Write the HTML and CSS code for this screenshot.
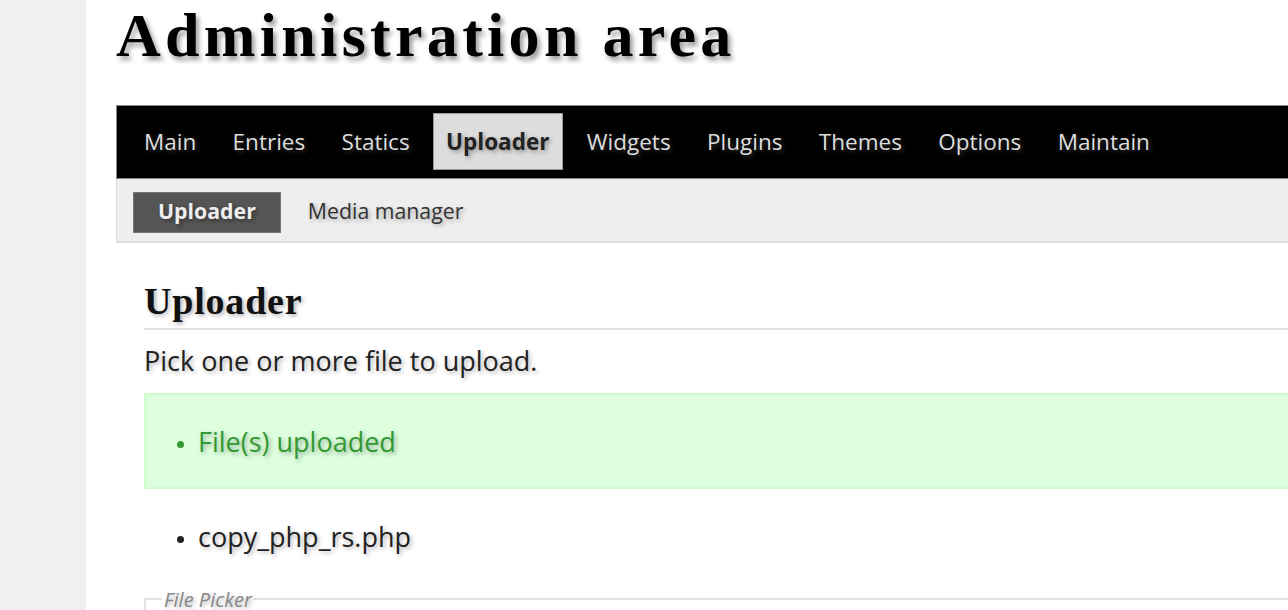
FILE: index.html
```html
<!DOCTYPE html>
<html lang="en">
<head>
<meta charset="utf-8">
<title>Administration area</title>
<link rel="stylesheet" href="styles.css">
</head>
<body>
<div class="page">
  <aside class="sidebar"></aside>
  <main class="main">
    <h1 class="site-title">Administration area</h1>
    <nav class="menu">
      <a class="menu-item" href="#">Main</a>
      <a class="menu-item" href="#">Entries</a>
      <a class="menu-item" href="#">Statics</a>
      <a class="menu-item active" href="#">Uploader</a>
      <a class="menu-item" href="#">Widgets</a>
      <a class="menu-item" href="#">Plugins</a>
      <a class="menu-item" href="#">Themes</a>
      <a class="menu-item" href="#">Options</a>
      <a class="menu-item" href="#">Maintain</a>
    </nav>
    <nav class="submenu">
      <a class="sub-item active" href="#">Uploader</a>
      <a class="sub-item" href="#">Media manager</a>
    </nav>
    <section class="content">
      <h2 class="section-title">Uploader</h2>
      <p class="intro">Pick one or more file to upload.</p>
      <div class="success">
        <ul class="success-list">
          <li>File(s) uploaded</li>
        </ul>
      </div>
      <ul class="file-list">
        <li>copy_php_rs.php</li>
      </ul>
      <fieldset class="picker">
        <legend class="picker-legend">File Picker</legend>
        <div class="picker-body"></div>
      </fieldset>
    </section>
  </main>
</div>
</body>
</html>
```

FILE: styles.css
```css
html, body {
  margin: 0;
  padding: 0;
  overflow: hidden;
  background: #ffffff;
}

body {
  font-family: "Open Sans", "Noto Sans", sans-serif;
  color: #222;
  text-shadow: 2px 2px 4px rgba(0, 0, 0, 0.3);
}

.page {
  display: flex;
  width: 1500px;
  min-height: 610px;
}

.sidebar {
  width: 86px;
  flex: 0 0 86px;
  background: #f0f0f0;
}

.main {
  flex: 1;
  padding-left: 30px;
}

.site-title {
  margin: 4px 0 39px 0;
  font-family: "Liberation Serif", "Times New Roman", serif;
  font-weight: bold;
  font-size: 62px;
  line-height: 62px;
  letter-spacing: 4.3px;
  color: #000;
  text-shadow: 3px 4px 5px rgba(0, 0, 0, 0.4);
}

.menu {
  display: flex;
  background: #000;
  border: 1px solid #888;
  padding: 7px 0 8px 14px;
}

.menu-item {
  display: block;
  font-size: 22.5px;
  line-height: 55px;
  padding: 0 12px;
  margin-right: 10.4px;
  border: 1px solid transparent;
  color: #ddd;
  text-decoration: none;
  text-shadow: 2px 2px 4px rgba(80, 80, 80, 0.6);
}

.menu-item.active {
  background: #ddd;
  border-color: #999;
  color: #222;
  font-weight: bold;
  padding: 0 13px 0 12px;
  text-shadow: 2px 2px 4px rgba(0, 0, 0, 0.35);
}

.submenu {
  display: flex;
  gap: 2px;
  background: #eee;
  border-left: 1px solid #ddd;
  border-bottom: 2px solid #ddd;
  padding: 13px 0 8px 16px;
}

.sub-item {
  display: block;
  font-size: 21.3px;
  line-height: 35px;
  padding: 0 24px 4px 24px;
  border: 1px solid transparent;
  color: #333;
  text-decoration: none;
}

.sub-item.active {
  background: #555;
  border-color: #777;
  color: #eee;
  font-weight: bold;
  text-shadow: 2px 2px 4px rgba(0, 0, 0, 0.4);
}

.content {
  padding-left: 28px;
}

.section-title {
  margin: 36px 0 0 0;
  padding-bottom: 3px;
  font-family: "Liberation Serif", "Times New Roman", serif;
  font-weight: bold;
  font-size: 38px;
  line-height: 1.2;
  letter-spacing: 0.8px;
  color: #111;
  border-bottom: 2px solid #e0e0e0;
}

.intro {
  margin: 12px 0 14px 0;
  font-size: 27px;
  line-height: 1.4;
}

.success {
  background: #dfd;
  border: 2px solid #cfc;
  padding: 28px 0 26px 0;
}

.success-list {
  margin: 0;
  padding-left: 52px;
  font-size: 27px;
  line-height: 1.4;
  color: #393;
}

.success-list li::marker,
.file-list li::marker {
  font-size: 20px;
}

.file-list {
  margin: 29px 0 0 0;
  padding-left: 54px;
  font-size: 27px;
  line-height: 1.4;
}

.picker {
  margin: 30px 0 0 0;
  padding: 0 16px 20px 16px;
  border: 2px solid #e2e2e2;
}

.picker-legend {
  padding: 0 2px;
  font-size: 20px;
  line-height: 27px;
  font-style: italic;
  color: #888;
}

.picker-body {
  height: 80px;
}
```
